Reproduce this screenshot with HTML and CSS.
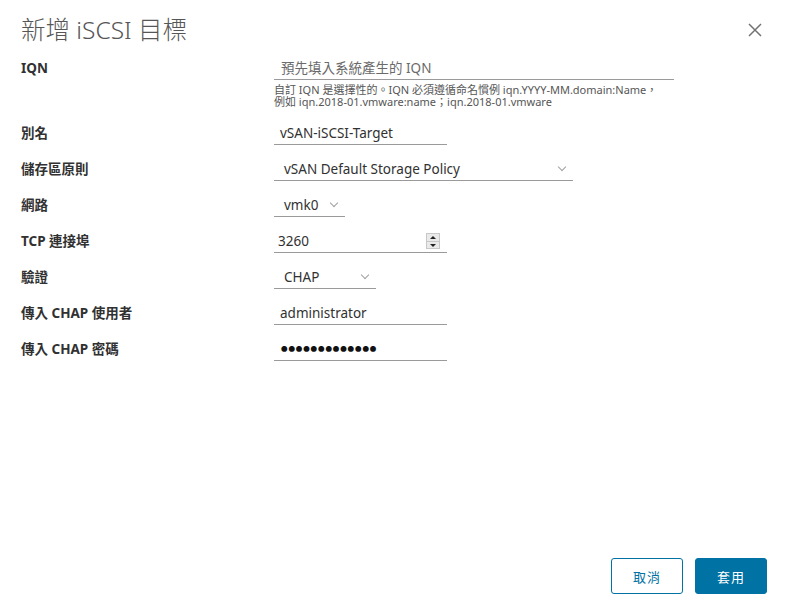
FILE: index.html
```html
<!DOCTYPE html>
<html lang="zh-Hant">
<head>
    <meta charset="UTF-8">
    <title>新增 iSCSI 目標</title>
    <link rel="stylesheet" href="styles.css">
</head>
<body>
<div class="dialog">
    <div class="header">
        <h1 class="title">新增 iSCSI 目標</h1>
        <button class="close" aria-label="關閉">
            <svg width="14" height="14" viewBox="0 0 14 14"><path d="M1 1 L13 13 M13 1 L1 13" stroke="#737373" stroke-width="1.5" fill="none"/></svg>
        </button>
    </div>

    <div class="form">
        <div class="row row-iqn">
            <label class="label">IQN</label>
            <div>
                <div class="field field-iqn placeholder">預先填入系統產生的 IQN</div>
                <div class="helper">
                    <div>自訂 IQN 是選擇性的。IQN 必須遵循命名慣例 iqn.YYYY-MM.domain:Name，</div>
                    <div>例如 iqn.2018-01.vmware:name；iqn.2018-01.vmware</div>
                </div>
            </div>
        </div>
        <div class="row">
            <label class="label">別名</label>
            <div class="field field-md">vSAN-iSCSI-Target</div>
        </div>
        <div class="row">
            <label class="label">儲存區原則</label>
            <div class="field select select-policy">vSAN Default Storage Policy<span class="chevron"></span></div>
        </div>
        <div class="row">
            <label class="label">網路</label>
            <div class="field select select-net">vmk0<span class="chevron"></span></div>
        </div>
        <div class="row">
            <label class="label">TCP 連接埠</label>
            <div class="field field-md number">3260<span class="spinner"><span class="up"></span><span class="down"></span></span></div>
        </div>
        <div class="row">
            <label class="label">驗證</label>
            <div class="field select select-auth">CHAP<span class="chevron"></span></div>
        </div>
        <div class="row">
            <label class="label">傳入 CHAP 使用者</label>
            <div class="field field-md">administrator</div>
        </div>
        <div class="row">
            <label class="label">傳入 CHAP 密碼</label>
            <div class="field field-md password">●●●●●●●●●●●●●</div>
        </div>
    </div>

    <div class="footer">
        <button class="btn btn-outline">取消</button>
        <button class="btn btn-primary">套用</button>
    </div>
</div>
</body>
</html>
```

FILE: styles.css
```css
html, body {
    margin: 0;
    padding: 0;
    background: #fff;
}

body, button {
    font-family: "Noto Sans", "Noto Sans CJK TC", sans-serif;
    color: #313131;
}

.dialog {
    height: 608px;
    box-sizing: border-box;
    padding: 14px 21px 14px 21px;
    display: flex;
    flex-direction: column;
}

.header {
    display: flex;
    justify-content: space-between;
    align-items: center;
    height: 32px;
}

.title {
    margin: 0;
    font-size: 24.5px;
    font-weight: 300;
    line-height: 32px;
    color: #565656;
}

.close {
    border: none;
    background: none;
    padding: 0;
    margin-right: 5px;
    width: 14px;
    height: 14px;
    display: flex;
}

.form {
    margin-top: 11px;
    display: flex;
    flex-direction: column;
    gap: 13px;
}

.row {
    display: grid;
    grid-template-columns: 253px auto;
    align-items: start;
}

.row-iqn {
    margin-bottom: 1px;
}

.label {
    font-size: 13.5px;
    font-weight: 700;
    line-height: 22px;
    color: #313131;
}

.field {
    box-sizing: border-box;
    height: 23px;
    line-height: 22px;
    font-size: 13.5px;
    border-bottom: 1px solid #9a9a9a;
    padding-left: 6px;
    color: #313131;
    position: relative;
}

.field-iqn {
    width: 400px;
    padding-left: 7px;
}

.placeholder {
    color: #6a6a6a;
}

.helper {
    margin-top: 4px;
    font-size: 11px;
    line-height: 12px;
    color: #565656;
}

.field-md {
    width: 173px;
}

.number {
    padding-left: 4px;
}

.select {
    padding-left: 10px;
}

.select-policy {
    width: 299px;
}

.select-net {
    width: 71px;
}

.select-auth {
    width: 102px;
}

.chevron {
    position: absolute;
    right: 8px;
    top: 6px;
    width: 5px;
    height: 5px;
    border-right: 1px solid #a0a0a0;
    border-bottom: 1px solid #a0a0a0;
    transform: rotate(45deg);
}

.spinner {
    position: absolute;
    right: 7px;
    top: 3px;
    width: 14px;
    height: 16px;
    background: #eaeaea;
    border: 1px solid #c8c8c8;
    box-sizing: border-box;
    display: flex;
    flex-direction: column;
}

.spinner span {
    flex: 1;
    position: relative;
}

.spinner .up {
    border-bottom: 1px solid #c8c8c8;
}

.spinner .up::after, .spinner .down::after {
    content: "";
    position: absolute;
    left: 3px;
    border-left: 3px solid transparent;
    border-right: 3px solid transparent;
}

.spinner .up::after {
    top: 2px;
    border-bottom: 3px solid #222;
}

.spinner .down::after {
    top: 2px;
    border-top: 3px solid #222;
}

.password {
    font-size: 6.5px;
    letter-spacing: 0.9px;
    color: #111;
    padding-left: 7px;
}

.footer {
    margin-top: auto;
    display: flex;
    justify-content: flex-end;
    gap: 12px;
}

.btn {
    width: 72px;
    height: 36px;
    border-radius: 3px;
    font-size: 13px;
    letter-spacing: 1px;
    border: 1px solid #0072a3;
    cursor: pointer;
}

.btn-outline {
    background: #fff;
    color: #0072a3;
}

.btn-primary {
    background: #0072a3;
    color: #fff;
}
```
